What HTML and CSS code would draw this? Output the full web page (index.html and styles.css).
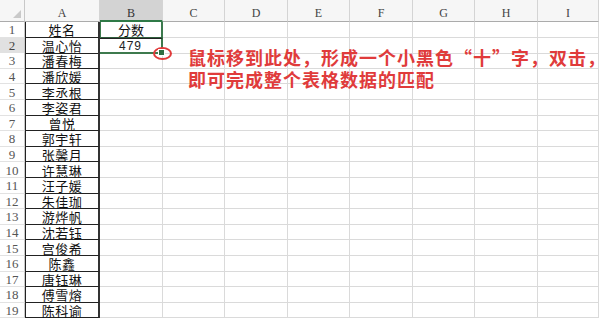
FILE: index.html
```html
<!DOCTYPE html>
<html lang="zh">
<head>
<meta charset="utf-8">
<title>Sheet</title>
<link rel="stylesheet" href="styles.css">
</head>
<body>
<div class="sheet">
  <div class="row head">
    <div class="rh corner"><span class="tri"></span></div>
    <div class="ch">A</div><div class="ch sel">B</div><div class="ch">C</div><div class="ch">D</div><div class="ch">E</div><div class="ch">F</div><div class="ch">G</div><div class="ch">H</div><div class="ch">I</div>
  </div>
  <div class="row"><div class="rh">1</div><div class="c a">姓名</div><div class="c b b1">分数</div><div class="c"></div><div class="c"></div><div class="c"></div><div class="c"></div><div class="c"></div><div class="c"></div><div class="c"></div></div>
  <div class="row"><div class="rh sel">2</div><div class="c a">温心怡</div><div class="c b active">479<span class="handle"></span><span class="ring"></span></div><div class="c"></div><div class="c"></div><div class="c"></div><div class="c"></div><div class="c"></div><div class="c"></div><div class="c"></div></div>
  <div class="row"><div class="rh">3</div><div class="c a">潘春梅</div><div class="c b"></div><div class="c"></div><div class="c"></div><div class="c"></div><div class="c"></div><div class="c"></div><div class="c"></div><div class="c"></div></div>
  <div class="row"><div class="rh">4</div><div class="c a">潘欣媛</div><div class="c b"></div><div class="c"></div><div class="c"></div><div class="c"></div><div class="c"></div><div class="c"></div><div class="c"></div><div class="c"></div></div>
  <div class="row"><div class="rh">5</div><div class="c a">李丞根</div><div class="c b"></div><div class="c"></div><div class="c"></div><div class="c"></div><div class="c"></div><div class="c"></div><div class="c"></div><div class="c"></div></div>
  <div class="row"><div class="rh">6</div><div class="c a">李姿君</div><div class="c b"></div><div class="c"></div><div class="c"></div><div class="c"></div><div class="c"></div><div class="c"></div><div class="c"></div><div class="c"></div></div>
  <div class="row"><div class="rh">7</div><div class="c a">曾悦</div><div class="c b"></div><div class="c"></div><div class="c"></div><div class="c"></div><div class="c"></div><div class="c"></div><div class="c"></div><div class="c"></div></div>
  <div class="row"><div class="rh">8</div><div class="c a">郭宇轩</div><div class="c b"></div><div class="c"></div><div class="c"></div><div class="c"></div><div class="c"></div><div class="c"></div><div class="c"></div><div class="c"></div></div>
  <div class="row"><div class="rh">9</div><div class="c a">张馨月</div><div class="c b"></div><div class="c"></div><div class="c"></div><div class="c"></div><div class="c"></div><div class="c"></div><div class="c"></div><div class="c"></div></div>
  <div class="row"><div class="rh">10</div><div class="c a">许慧琳</div><div class="c b"></div><div class="c"></div><div class="c"></div><div class="c"></div><div class="c"></div><div class="c"></div><div class="c"></div><div class="c"></div></div>
  <div class="row"><div class="rh">11</div><div class="c a">汪子媛</div><div class="c b"></div><div class="c"></div><div class="c"></div><div class="c"></div><div class="c"></div><div class="c"></div><div class="c"></div><div class="c"></div></div>
  <div class="row"><div class="rh">12</div><div class="c a">朱佳珈</div><div class="c b"></div><div class="c"></div><div class="c"></div><div class="c"></div><div class="c"></div><div class="c"></div><div class="c"></div><div class="c"></div></div>
  <div class="row"><div class="rh">13</div><div class="c a">游烨帆</div><div class="c b"></div><div class="c"></div><div class="c"></div><div class="c"></div><div class="c"></div><div class="c"></div><div class="c"></div><div class="c"></div></div>
  <div class="row"><div class="rh">14</div><div class="c a">沈若钰</div><div class="c b"></div><div class="c"></div><div class="c"></div><div class="c"></div><div class="c"></div><div class="c"></div><div class="c"></div><div class="c"></div></div>
  <div class="row"><div class="rh">15</div><div class="c a">宫俊希</div><div class="c b"></div><div class="c"></div><div class="c"></div><div class="c"></div><div class="c"></div><div class="c"></div><div class="c"></div><div class="c"></div></div>
  <div class="row"><div class="rh">16</div><div class="c a">陈鑫</div><div class="c b"></div><div class="c"></div><div class="c"></div><div class="c"></div><div class="c"></div><div class="c"></div><div class="c"></div><div class="c"></div></div>
  <div class="row"><div class="rh">17</div><div class="c a">唐钰琳</div><div class="c b"></div><div class="c"></div><div class="c"></div><div class="c"></div><div class="c"></div><div class="c"></div><div class="c"></div><div class="c"></div></div>
  <div class="row"><div class="rh">18</div><div class="c a">傅雪熔</div><div class="c b"></div><div class="c"></div><div class="c"></div><div class="c"></div><div class="c"></div><div class="c"></div><div class="c"></div><div class="c"></div></div>
  <div class="row"><div class="rh">19</div><div class="c a">陈科谕</div><div class="c b"></div><div class="c"></div><div class="c"></div><div class="c"></div><div class="c"></div><div class="c"></div><div class="c"></div><div class="c"></div></div>

  <div class="note">鼠标移到此处，形成一个小黑色“十”字，双击，<br>即可完成整个表格数据的匹配</div>
</div>
</body>
</html>
```
FILE: styles.css
```css
* { box-sizing: border-box; }
html, body { margin: 0; padding: 0; background: #fff; }
body { width: 599px; height: 318px; overflow: hidden; }

.sheet {
  position: relative;
  width: 599px;
  height: 318px;
  overflow: hidden;
  font-family: "Noto Sans CJK SC", "Liberation Sans", sans-serif;
}

.row {
  display: grid;
  grid-template-columns: 25px 75px 63px 62px 63px 62px 63px 62px 63px 61px;
  height: 15.6px;
}
.row.head { height: 22px; }

.rh {
  background: #fff;
  border-right: 1px solid #c8c8c8;
  border-bottom: 1px solid #e2e2e2;
  font-family: "Liberation Serif", "DejaVu Serif", serif;
  font-size: 13px;
  color: #555;
  display: flex;
  align-items: center;
  justify-content: center;
  line-height: 12px;
  padding-top: 2px;
}
.rh.sel { background: #e1e1e1; color: #444; }
.rh.corner { position: relative; border-bottom: 1px solid #ababab; background: #f6f6f6; }
.tri {
  position: absolute;
  right: 3px;
  bottom: 3px;
  width: 0; height: 0;
  border-left: 8px solid transparent;
  border-bottom: 8px solid #c9c9c9;
}

.ch {
  background: #f6f6f6;
  border-right: 1px solid #d4d4d4;
  border-bottom: 1px solid #ababab;
  font-family: "Liberation Serif", "DejaVu Serif", serif;
  font-size: 12px;
  line-height: 12px;
  color: #444;
  display: flex;
  align-items: center;
  justify-content: center;
  padding-top: 5px;
}
.ch.sel { background: #d3d3d3; border-bottom: 2px solid #2f7a47; color: #333; }

.c {
  border-right: 1px solid #dadada;
  border-bottom: 1px solid #dadada;
  font-size: 13px;
  line-height: 13px;
  color: #111;
  display: flex;
  align-items: center;
  justify-content: center;
  position: relative;
  padding-top: 1px;
}
.c.a {
  border: 1px solid #222;
  border-top: none;
  border-right: 2px solid #333;
  letter-spacing: 0.5px;
}
.c.b1 {
  border: 1px solid #2f5e3c;
  border-top: none;
  border-left: 1px solid #3d7a4e;
  border-right: 2px solid #3d7a4e;
}
.c.active {
  border: 2px solid #3d7a4e;
  border-top: 1px solid #222;
  border-left: none;
  font-family: "Liberation Sans", "DejaVu Sans", sans-serif;
  font-size: 12px;
  line-height: 12px;
  letter-spacing: 1px;
  color: #222;
}
.handle {
  position: absolute;
  right: -4px;
  bottom: -4px;
  width: 5px;
  height: 5px;
  background: #2f6d42;
  border: 1px solid #fff;
  box-sizing: content-box;
  z-index: 3;
}
.ring {
  position: absolute;
  right: -11px;
  bottom: -8px;
  width: 19px;
  height: 13px;
  border: 2px solid #e03a3a;
  border-radius: 50%;
  z-index: 2;
}

.note {
  position: absolute;
  left: 188px;
  top: 46px;
  width: 411px;
  font-family: "Noto Sans CJK SC", sans-serif;
  font-weight: 700;
  font-size: 18px;
  line-height: 22px;
  letter-spacing: 1px;
  color: #e03b3b;
  white-space: nowrap;
}
```
